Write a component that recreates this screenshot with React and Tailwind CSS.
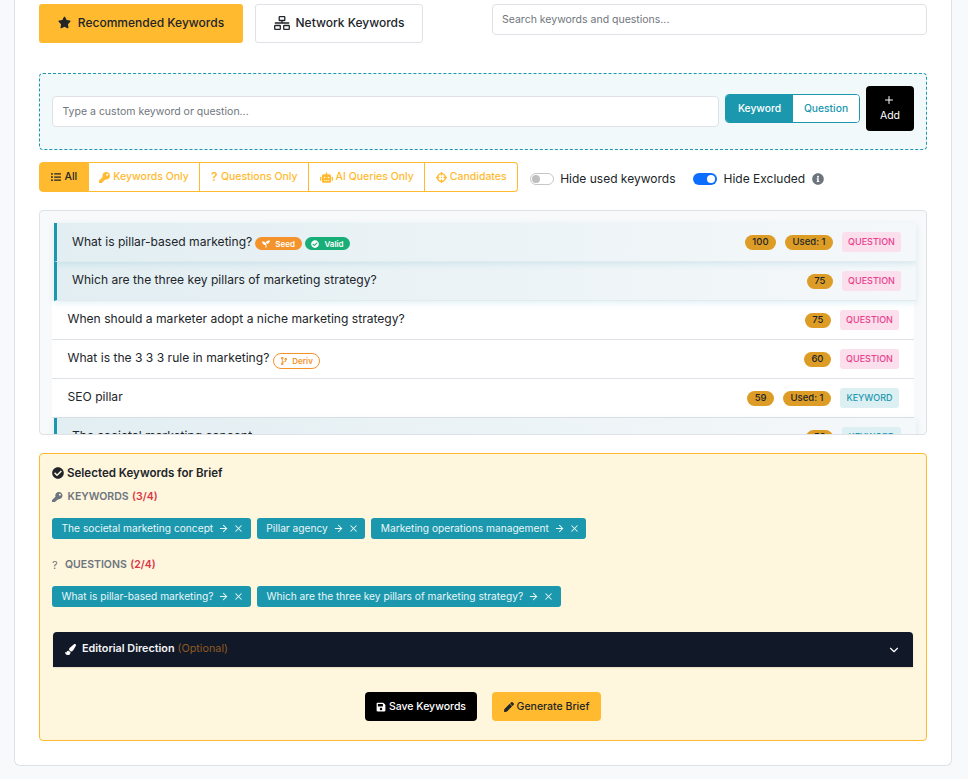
import React from "react";
import { FaStar, FaKey, FaRobot, FaCrosshairs, FaListUl, FaSeedling, FaCheckCircle, FaCodeBranch, FaSave, FaPen, FaPaintBrush, FaInfoCircle } from "react-icons/fa";
import { LuArrowRight, LuX, LuChevronDown, LuPlus } from "react-icons/lu";

const rows = [
  { text: "What is pillar-based marketing?", score: "100", used: true, type: "QUESTION", sel: true, seed: true },
  { text: "Which are the three key pillars of marketing strategy?", score: "75", type: "QUESTION", sel: true },
  { text: "When should a marketer adopt a niche marketing strategy?", score: "75", type: "QUESTION" },
  { text: "What is the 3 3 3 rule in marketing?", score: "60", type: "QUESTION", deriv: true },
  { text: "SEO pillar", score: "59", used: true, type: "KEYWORD" },
  { text: "The societal marketing concept", score: "56", type: "KEYWORD", sel: true },
];

function Pill({ children }) {
  return <span className="rounded-full bg-[#dd9c25] px-[7.5px] h-[15px] flex items-center text-[9.5px] font-medium text-[#212529] leading-none">{children}</span>;
}

function Row({ r }) {
  return (
    <div className={r.sel
      ? `flex items-center h-[39px] shrink-0 translate-x-[2px] border-l-[3px] border-b border-l-[#1b98ae] border-b-[#e1ebef] bg-gradient-to-r from-[#e2eef2] to-[#f5f8fa] pl-[15px] pr-[15px] shadow-[0_2px_6px_rgba(27,152,174,0.14)] ${r.seed ? "z-10" : ""}`
      : "flex items-center h-[39px] shrink-0 border-b border-[#dee2e6] bg-white pl-[15.5px] pr-[15px]"}>
      <div className={`flex-1 flex items-center text-[12.1px] text-[#212529] ${r.seed ? "" : "pb-[2px]"}`}>
        <span>{r.text}</span>
        {r.seed && (
          <>
            <span className="ml-[3px] mt-[4px] flex items-center gap-[5px] rounded-full bg-[#f4932b] text-white text-[8px] font-semibold h-[13px] px-[7px]"><FaSeedling className="text-[8px]" />Seed</span>
            <span className="ml-[3px] mt-[4px] flex items-center gap-[5px] rounded-full bg-[#18ae77] text-white text-[8px] font-semibold h-[13px] px-[6.5px]"><FaCheckCircle className="text-[8px]" />Valid</span>
          </>
        )}
        {r.deriv && (
          <span className="ml-[4px] mt-[5px] flex items-center gap-[4px] rounded-full border border-[#f4932b] bg-white text-[#f4932b] text-[8px] font-semibold h-[16px] px-[6px]"><FaCodeBranch className="text-[8px]" />Deriv</span>
        )}
      </div>
      <div className="flex items-center gap-[9px]">
        <Pill>{r.score}</Pill>
        {r.used && <Pill>Used: 1</Pill>}
      </div>
      <span className={r.type === "QUESTION"
        ? "ml-[9px] w-[59px] h-[20px] flex items-center justify-center rounded-[3px] bg-[#fbdfec] text-[#e83e8c] text-[9px] font-medium"
        : "ml-[9px] w-[59px] h-[20px] flex items-center justify-center rounded-[3px] bg-[#dcf0f4] text-[#1b98ae] text-[9px] font-medium"}>{r.type}</span>
    </div>
  );
}

function Chip({ children }) {
  return (
    <span className="inline-flex items-center h-[21px] rounded-[3px] bg-[#1b98ae] text-[#e9f6f8] text-[10.2px] pl-[9.5px] pr-[6.5px]">
      {children}
      <LuArrowRight className="ml-[5px] text-[11px]" strokeWidth={2.2} />
      <LuX className="ml-[4px] text-[11px]" strokeWidth={2.2} />
    </span>
  );
}

function Filter({ children, active, last, first }) {
  return (
    <span className={`flex items-center gap-[3px] h-[30px] px-[10.5px] text-[10.5px] border-y border-r border-[#ffba2f] ${first ? "border-l rounded-l-[4px]" : ""} ${last ? "rounded-r-[4px]" : ""} ${active ? "bg-[#ffba2f] text-[#212529] font-medium" : "bg-white text-[#ffba2f] font-medium"}`}>{children}</span>
  );
}

function NetworkIcon() {
  return (
    <svg width="16" height="14" viewBox="0 0 16 14" fill="none" stroke="#212529" strokeWidth="1.3">
      <rect x="5.2" y="0.7" width="5.6" height="3.8" rx="0.6" />
      <rect x="0.7" y="9.5" width="5.6" height="3.8" rx="0.6" />
      <rect x="9.7" y="9.5" width="5.6" height="3.8" rx="0.6" />
      <path d="M8 4.5V7M0.8 7H15.2" />
    </svg>
  );
}

export default function App() {
  return (
    <div className="min-h-[779px] bg-[#f8f9fa] px-[14px] pb-[13px] font-['Inter',sans-serif] text-[#212529]">
      <div className="w-[938px] h-[766px] bg-white border border-t-0 border-[#dee2e6] rounded-b-[6px] px-[24px] pt-[4px]">
        <div className="flex items-start">
          <button className="flex items-center justify-center w-[204px] h-[39px] pb-[2px] rounded-[3px] bg-[#ffba2f] text-[12px] font-medium text-[#212529] gap-[7px]"><FaStar className="text-[13px]" />Recommended Keywords</button>
          <button className="ml-[12px] flex items-center justify-center w-[168px] h-[39px] pb-[2px] rounded-[3px] border border-[#dee2e6] bg-white text-[12px] font-medium text-[#212529] gap-[6px]"><NetworkIcon />Network Keywords</button>
          <div className="ml-[69px] flex-1 h-[31px] rounded-[4px] border border-[#dee2e6] bg-white flex items-center px-[9px] text-[10.5px] text-[#6f767d]">Search keywords and questions...</div>
        </div>

        <div className="mt-[30px] h-[77px] rounded-[4px] border border-dashed border-[#1b98ae] bg-[#f1f9fb] flex items-center pl-[12px] pr-[12px] gap-[6px]">
          <div className="flex-1 h-[31px] rounded-[4px] border border-[#dee2e6] bg-white flex items-center px-[9.5px] text-[10.5px] text-[#6f767d]">Type a custom keyword or question...</div>
          <div className="flex mb-[6px] h-[29px] w-[135px] rounded-[4px] border border-[#1b98ae] overflow-hidden text-[10.3px] font-medium">
            <span className="w-[67px] bg-[#1b98ae] text-white flex items-center justify-center">Keyword</span>
            <span className="flex-1 bg-white text-[#1b98ae] flex items-center justify-center">Question</span>
          </div>
          <button className="mb-[6px] w-[48px] h-[45px] rounded-[4px] bg-black text-white text-[10.5px] flex flex-col items-center justify-center leading-[15px]"><LuPlus className="text-[12px] mb-[2px] -translate-x-[1px]" />Add</button>
        </div>

        <div className="mt-[12px] flex items-center h-[30px]">
          <Filter first active><span className="flex items-center gap-[4px]"><FaListUl className="text-[10px]" />All</span></Filter>
          <Filter><FaKey className="text-[11px]" />Keywords Only</Filter>
          <Filter><span className="w-[7px] text-[12px] font-semibold leading-none">?</span>Questions Only</Filter>
          <Filter><FaRobot className="text-[13px]" />AI Queries Only</Filter>
          <Filter last><FaCrosshairs className="text-[11px]" />Candidates</Filter>
          <div className="mt-[4px] flex items-center">
            <span className="ml-[12px] w-[24px] h-[12px] rounded-full border border-[#c4c8cc] bg-white flex items-center pl-[1px]"><span className="w-[8px] h-[8px] rounded-full bg-[#bfbfbf]" /></span>
            <span className="ml-[6px] text-[12px] text-[#212529]">Hide used keywords</span>
            <span className="ml-[18px] w-[24px] h-[12px] rounded-full bg-[#0d6efd] flex items-center justify-end pr-[2px]"><span className="w-[8px] h-[8px] rounded-full bg-white" /></span>
            <span className="ml-[6px] text-[12px] text-[#212529]">Hide Excluded</span>
            <FaInfoCircle className="ml-[7px] text-[12px] text-[#6c757d]" />
          </div>
        </div>

        <div className="mt-[18px] h-[225px] overflow-hidden rounded-[4px] border border-[#dee2e6] bg-[#f7f9fa] pt-[12px] px-[12px] flex flex-col">
          {rows.map((r) => <Row key={r.text} r={r} />)}
        </div>

        <div className="mt-[18px] h-[288px] rounded-[4px] border border-[#ffba2f] bg-[#fff6de] px-[12px] pt-[11px]">
          <div className="flex items-center gap-[3px] text-[11.55px] font-semibold leading-[16px]"><FaCheckCircle className="text-[12px]" />Selected Keywords for Brief</div>
          <div className="mt-[8px] flex items-center text-[10.5px] font-semibold text-[#6c757d] leading-[16px]"><FaKey className="text-[10.5px] mr-[5px]" />KEYWORDS<span className="ml-[3.5px] text-[#dc3545]">(3/4)</span></div>
          <div className="mt-[13px] flex gap-[6px]">
            <Chip>The societal marketing concept</Chip>
            <Chip>Pillar agency</Chip>
            <Chip>Marketing operations management</Chip>
          </div>
          <div className="mt-[18px] flex items-center text-[10.5px] font-semibold text-[#6c757d] leading-[16px]"><span className="w-[13px] text-[11px] font-normal">?</span>QUESTIONS<span className="ml-[3.5px] text-[#dc3545]">(2/4)</span></div>
          <div className="mt-[13px] flex gap-[6px]">
            <Chip>What is pillar-based marketing?</Chip>
            <Chip>Which are the three key pillars of marketing strategy?</Chip>
          </div>
          <div className="mt-[25px] ml-[1px] w-[860px] h-[35px] rounded-t-[4px] bg-[#111827] flex items-center pl-[12px] pr-[12px] shadow-[0_1px_2px_rgba(0,0,0,0.1)]">
            <FaPaintBrush className="text-[11px] text-white" />
            <span className="ml-[6px] text-[10.8px] font-semibold text-[#f3f4f6]">Editorial Direction</span>
            <span className="ml-[3px] text-[10.8px] text-[#8f5a24]">(Optional)</span>
            <LuChevronDown className="ml-auto text-[14px] text-white" />
          </div>
          <div className="mt-[25px] flex justify-center gap-[15px]">
            <button className="w-[112px] h-[29px] rounded-[4px] bg-black text-white text-[10.5px] font-medium flex items-center justify-center gap-[3px]"><FaSave className="text-[10px]" />Save Keywords</button>
            <button className="w-[109px] h-[29px] rounded-[4px] bg-[#ffba2f] text-[#212529] text-[10.5px] font-medium flex items-center justify-center gap-[3px]"><FaPen className="text-[10px]" />Generate Brief</button>
          </div>
        </div>
      </div>
    </div>
  );
}
